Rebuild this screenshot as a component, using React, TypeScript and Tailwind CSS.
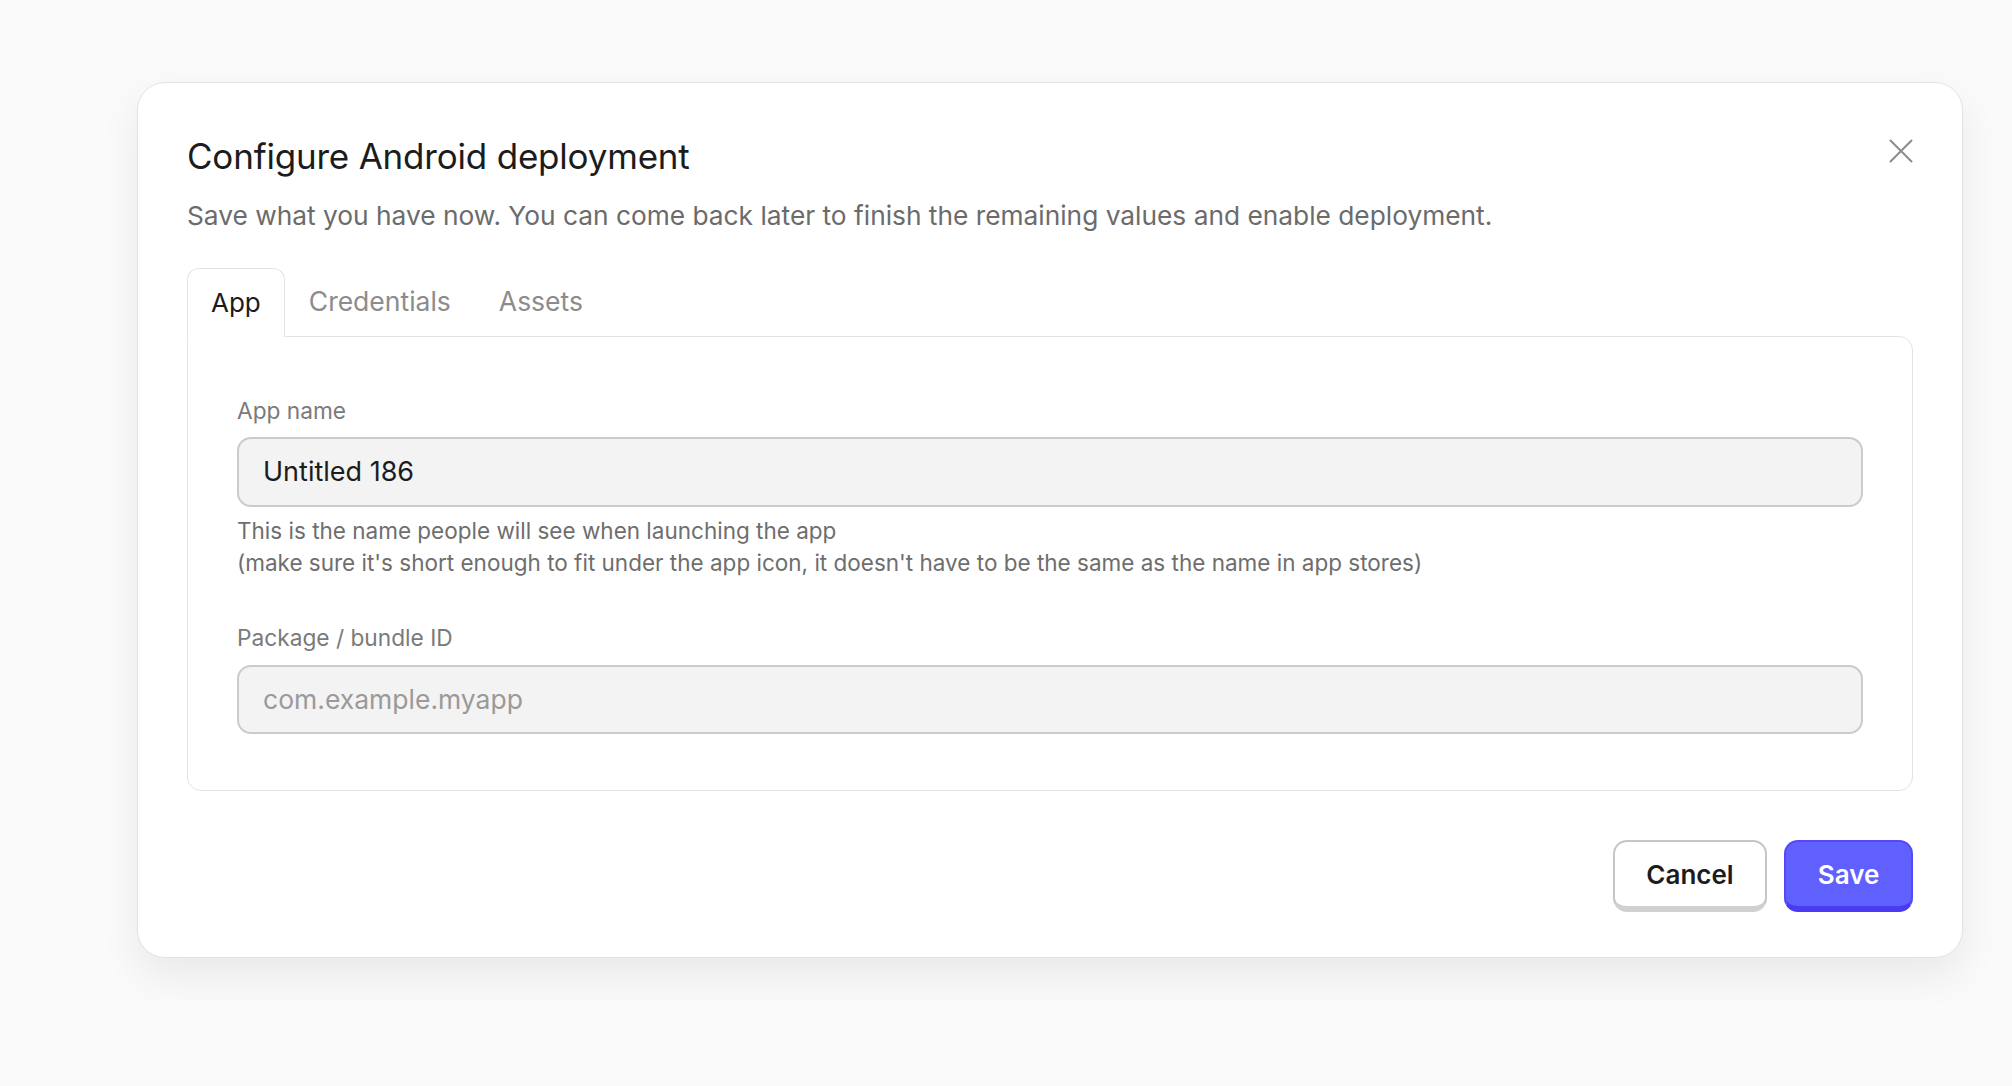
import React from "react";

export default function App() {
  const font = { fontFamily: "Inter, 'Noto Sans', sans-serif" };
  return (
    <div className="min-h-[1086px] w-full bg-[#fafafa] pl-[137px] pt-[82px]" style={font}>
      <div className="w-[1826px] h-[876px] bg-white border border-[#e3e3e3] rounded-[28px] shadow-[0_18px_40px_rgba(0,0,0,0.07)] px-[49px] pt-[53px] flex flex-col">
        <div className="flex items-start justify-between">
          <h1 className="text-[35px] leading-[40px] text-[#1c1c1c] font-normal tracking-[-0.2px]">
            Configure Android deployment
          </h1>
          <button className="mt-[3px] w-[24px] h-[24px] flex items-center justify-center text-[#8c8c8c]" aria-label="Close">
            <svg width="24" height="24" viewBox="0 0 24 24" fill="none" stroke="currentColor" strokeWidth="2" strokeLinecap="round">
              <path d="M1.5 1.5 L22.5 22.5 M22.5 1.5 L1.5 22.5" />
            </svg>
          </button>
        </div>
        <p className="mt-[23px] text-[26.3px] leading-[34px] text-[#6b6b6b]">
          Save what you have now. You can come back later to finish the remaining values and enable deployment.
        </p>

        <div className="mt-[35px] flex items-end">
          <div className="relative z-10 -mb-px h-[69px] px-[23px] flex items-center border border-[#e3e3e3] border-b-white bg-white rounded-t-[12px] text-[26px] text-[#1c1c1c]">
            App
          </div>
          <div className="h-[68px] px-[24px] flex items-center text-[26.5px] text-[#8c8c8c]">Credentials</div>
          <div className="h-[68px] px-[24px] flex items-center text-[26.5px] text-[#8c8c8c]">Assets</div>
        </div>

        <div className="border border-[#e3e3e3] rounded-b-[14px] rounded-tr-[14px] px-[49px] pt-[60px] pb-[56px]">
          <label className="block text-[22.7px] leading-[28px] text-[#7a7a7a]">App name</label>
          <div className="mt-[12px] h-[70px] rounded-[14px] border-2 border-[#cbcbcb] bg-[#f3f3f3] px-[24px] flex items-center text-[27px] text-[#1c1c1c]">
            Untitled 186
          </div>
          <p className="mt-[8px] text-[22.5px] leading-[32px] text-[#6e6e6e]">
            This is the name people will see when launching the app
            <br />
            (make sure it's short enough to fit under the app icon, it doesn't have to be the same as the name in app stores)
          </p>
          <label className="mt-[45px] block text-[22.7px] leading-[28px] text-[#7a7a7a]">Package / bundle ID</label>
          <div className="mt-[13px] h-[69px] rounded-[14px] border-2 border-[#cbcbcb] bg-[#f3f3f3] px-[24px] flex items-center text-[26.5px] text-[#9a9a9a]">
            com.example.myapp
          </div>
        </div>

        <div className="mt-[49px] flex justify-end gap-[17px]">
          <button className="h-[72px] w-[154px] rounded-[14px] border-2 border-[#c6c6c6] border-b-[6px] border-b-[#d0d0d0] bg-white text-[26px] font-semibold text-[#1c1c1c]">
            Cancel
          </button>
          <button className="h-[72px] w-[129px] rounded-[14px] border-2 border-[#5548f7] border-b-[6px] border-b-[#4a3af0] bg-[#6060ff] text-[26px] font-semibold text-white">
            Save
          </button>
        </div>
      </div>
    </div>
  );
}
